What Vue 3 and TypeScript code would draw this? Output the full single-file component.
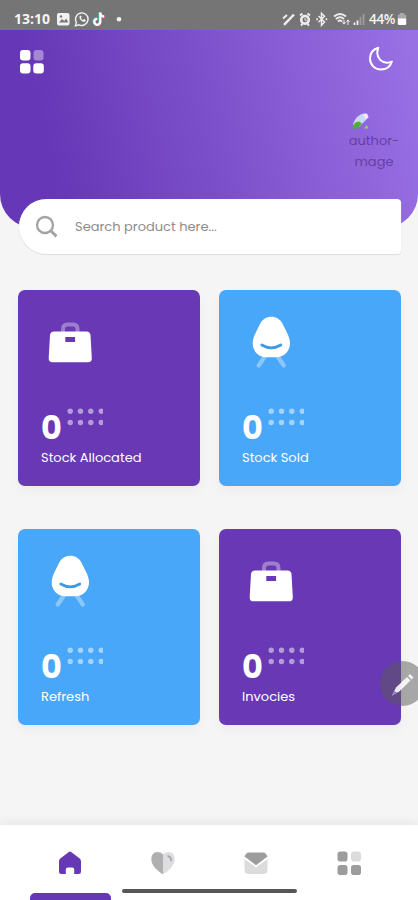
<script setup lang="ts">
interface StockCard {
  label: string
  value: number
  tone: 'purple' | 'blue'
  icon: 'bag' | 'chair'
  name: string
}

const cards: StockCard[] = [
  { label: 'Stock Allocated', value: 0, tone: 'purple', icon: 'bag', name: 'allocated' },
  { label: 'Stock Sold', value: 0, tone: 'blue', icon: 'chair', name: 'sold' },
  { label: 'Refresh', value: 0, tone: 'blue', icon: 'chair', name: 'refresh' },
  { label: 'Invocies', value: 0, tone: 'purple', icon: 'bag', name: 'invoices' },
]

const dotColumns = [3.2, 13.5, 23.8, 34.3]
const dotRows = [3.2, 14.5]
</script>

<template>
  <div class="screen">
    <div class="status">
      <span class="clock">13:10</span>
      <svg class="status-left" width="68" height="18" viewBox="0 0 68 18">
        <rect x="1" y="3" width="12.5" height="12.5" rx="2" fill="#f2f2f2" />
        <path d="M3 12.5l3-3.5 2.2 2 2-2.4 2 3.9z" fill="#757575" />
        <circle cx="5" cy="6.5" r="1.2" fill="#757575" />
        <path d="M19.4 15.8l1-3.4a6.3 6.3 0 1 1 2.6 2.4z" fill="none" stroke="#f2f2f2" stroke-width="1.4" />
        <path d="M23.5 6.2c-.5 3 2.5 6 5.6 5.5l.7-1.7-1.9-.9-1 1c-1-.5-1.7-1.3-2-2.1l.8-.9-.8-1.7z" fill="#f2f2f2" />
        <path d="M44.3 2.5v9.3a3 3 0 1 1-3-3M44.3 3.5c.5 2 2 3 4 3.2" fill="none" stroke="#38cfc8" stroke-width="2.3" transform="translate(-.7 -.4)" />
        <path d="M44.3 2.5v9.3a3 3 0 1 1-3-3M44.3 3.5c.5 2 2 3 4 3.2" fill="none" stroke="#e5486c" stroke-width="2.3" transform="translate(.7 .6)" />
        <path d="M44.3 2.5v9.3a3 3 0 1 1-3-3M44.3 3.5c.5 2 2 3 4 3.2" fill="none" stroke="#fff" stroke-width="2.3" />
        <circle cx="63" cy="9.3" r="2.3" fill="#f2f2f2" />
      </svg>
      <svg class="status-right" width="84" height="18" viewBox="0 0 84 18">
        <g fill="none" stroke="#ededed" stroke-width="1.5">
          <path d="M3 14.800L13 4.500" stroke-width="2.500" />
          <path d="M2 8.500l4-3.500" stroke-width="2" />
          <circle cx="24" cy="9.800" r="3.800" stroke-width="2.600" />
          <path d="M24 8v2.200h1.800" stroke-width="1" />
          <path d="M19 5.500l2.500-2M29 5.500l-2.500-2M20 15.500l1.500-1.500M28 15.500L26.500 14" stroke-width="2" />
          <path d="M37.500 6l6 6-3 3.300V3.200l3 3-6 6" />
          <path d="M35.300 9.300h1.600M44.600 9.300h1.600" stroke-width="2" />
          <path d="M53 6.500q6-5 12 0M55 9q4-3.500 8 0M57 11.500q2-2 4 0" stroke-width="2" />
          <path d="M63 14v-4M67 10v5M61.500 12l1.500 2.200 1.500-2.200M65.500 12l1.500-2.200 1.500 2.200" stroke-width="1" />
          <path d="M73.500 15v-2.500M76.500 15v-4.500" stroke-width="1.800" />
          <path d="M79.500 15V7M82.500 15V4" stroke="#9d9d9d" stroke-width="1.800" />
        </g>
      </svg>
      <span class="battery-text">44%</span>
      <svg width="10" height="14" viewBox="0 0 10 14">
        <path d="M3 1h4v1.500h1q1.200 0 1.200 1.200V7H.8V3.700Q.8 2.500 2 2.500h1z" fill="#a9a9a9" />
        <path d="M.8 6.500h8.400v5.300q0 1.200-1.200 1.200H2Q.8 13 .8 11.800z" fill="#fff" />
      </svg>
    </div>

    <header class="hero">
      <div class="hero-top">
        <svg width="26" height="26" viewBox="0 0 26 26" fill="#fff">
          <rect x="1" y="1" width="10.500" height="10.500" rx="3" />
          <rect x="14.500" y="1" width="10" height="10.500" rx="3" opacity=".4" />
          <rect x="1" y="14.300" width="10.500" height="10.200" rx="3" />
          <rect x="14.300" y="14.300" width="10.500" height="10.200" rx="3" />
        </svg>
        <svg width="26" height="26" viewBox="0 0 26 26">
          <path d="M10.300 1.800C5.300 3.300 2 7.300 2 12.500 2 18.800 6.800 23.500 13 23.500c5.200 0 9.400-3.200 10.900-8-1.600.9-3.300 1.300-5 1.200C13.500 16.500 9.500 12.500 9.300 7.300c0-2 .2-3.800 1-5.500z" fill="none" stroke="#fff" stroke-width="2" stroke-linejoin="round" />
        </svg>
      </div>
      <div class="author">
        <svg width="18" height="17" viewBox="0 0 18 17">
          <path d="M1 12C2.500 6 6 2 11 .8h4l1.500 3.500L7 14z" fill="#c9d9f5" />
          <path d="M11 .8h4l1.500 3.700L13 6z" fill="#f3e6f7" />
          <path d="M.5 15.500Q1.500 8.500 7 8.500l3 2-4.500 5z" fill="#4eae35" />
          <path d="M12 15.500l2.500-3.500 1.500 2v1.500z" fill="#91cc7f" />
        </svg>
        <span class="alt-first">author-</span>
        <span class="alt-second">mage</span>
      </div>
    </header>

    <div class="search">
      <svg width="24" height="24" viewBox="0 0 24 24" fill="none" stroke="#a3a3a3">
        <circle cx="10" cy="10" r="8" stroke-width="2.300" />
        <path d="M16 16l5.500 5.300" stroke-width="3" />
      </svg>
      <span>Search product here...</span>
    </div>

    <main class="cards">
      <article v-for="card in cards" :key="card.name" class="card" :class="card.tone">
        <svg v-if="card.icon === 'bag'" class="card-icon" width="50" height="56" viewBox="0 0 50 56">
          <path d="M17 18v-3q0-4.500 4.500-4.500h5.500q4.500 0 4.500 4.500v3" fill="none" stroke="#fff" stroke-opacity=".36" stroke-width="4" />
          <path fill-rule="evenodd" d="M8 17.500h32.500q3.500 0 4 3.500l1.300 23q.2 4.300-4 4.300H6.700q-4.200 0-4-4.300L4 21q.5-3.500 4-3.500zM19.300 23v5h9.800v-5z" fill="#fff" />
        </svg>
        <svg v-else class="card-icon" width="50" height="56" viewBox="0 0 50 56">
          <path d="M17.500 43l-5.800 8.500M31 43l5.800 8.500" stroke="#fff" stroke-opacity=".36" stroke-width="4.300" stroke-linecap="round" />
          <path d="M24.300 2.700c5 0 8.700 2.500 11 6.500l4 8c2 4 3.700 8 3.700 12 0 8-6 14-14 14h-9.500c-8 0-13.800-6-13.800-14 0-4 1.700-8 3.700-12l4-8c2.300-4 6-6.500 10.900-6.500z" fill="#fff" />
          <path d="M14.800 31q9.500 5.600 19 0" fill="none" stroke="#3d9ae6" stroke-width="2.800" stroke-linecap="round" />
        </svg>
        <div class="figures">
          <span class="value">{{ card.value }}</span>
          <svg width="36" height="18" viewBox="0 0 36 18" fill="#fff" fill-opacity=".5">
            <template v-for="y in dotRows" :key="y">
              <circle v-for="x in dotColumns" :key="x" :cx="x" :cy="y" r="2.700" />
            </template>
          </svg>
        </div>
        <div class="label">{{ card.label }}</div>
      </article>
    </main>

    <nav class="tabs">
      <div class="tab">
        <svg width="28" height="28" viewBox="0 0 28 28">
          <path d="M12.500 3.200Q14 2 15.500 3.200l8.200 6.300q1.300 1 1.300 2.700v10.500q0 2.300-2.300 2.300h-4.500v-4.500q0-2-2-2h-4.400q-2 0-2 2V25H5.300Q3 25 3 22.700V12.200q0-1.700 1.300-2.700z" fill="#6638b6" />
        </svg>
        <span class="indicator"></span>
      </div>
      <div class="tab">
        <svg width="28" height="28" viewBox="0 0 28 28">
          <path d="M14 5.200Q11.500 3 8.300 3C4.700 3 2.300 6 2.300 10c0 5.500 4 10 10.200 14.500q.8.500 1.500.5z" fill="#b0b0b2" />
          <path d="M14 5.200Q16.500 3 19.700 3c3.600 0 6 3 6 7 0 5.500-4 10-10.200 14.500q-.8.500-1.500.5z" fill="#dedee0" />
          <path d="M18.500 7q4 .7 3.700 5.200" fill="none" stroke="#aaa" stroke-width="1.800" />
        </svg>
      </div>
      <div class="tab">
        <svg width="28" height="28" viewBox="0 0 28 28">
          <path d="M2.500 10l11.500 8.500L25.500 10v10.500q0 4.500-4.500 4.500H7q-4.500 0-4.500-4.500z" fill="#dcdcdc" />
          <path d="M7 3.500h14q2.800 0 4.500 4L14 16.200 2.500 7.500q1.700-4 4.500-4z" fill="#9c9c9e" />
        </svg>
      </div>
      <div class="tab">
        <svg width="28" height="28" viewBox="0 0 28 28" fill="#9c9c9e">
          <rect x="2.500" y="2.500" width="10" height="10" rx="2.800" />
          <rect x="16" y="2.500" width="10" height="10" rx="2.800" fill="#dcdcdc" />
          <rect x="2.500" y="16" width="10" height="10" rx="2.800" />
          <rect x="16" y="16" width="10" height="10" rx="2.800" />
        </svg>
      </div>
    </nav>

    <div class="pen">
      <svg width="24" height="26" viewBox="0 0 24 26">
        <path d="M1 24.500L5 16.500 16 6l3.500 3.500-11 10.700z" fill="#fff" fill-opacity=".88" />
        <path d="M17 5l2-2 3.500 3.500-2 2z" fill="#fff" fill-opacity=".85" />
        <path d="M1 24.500l2.200-4.400 3 1.700z" fill="#9a79cc" />
      </svg>
    </div>
    <div class="gesture"></div>
  </div>
</template>

<style>
body {
  margin: 0;
}
</style>

<style scoped>
.screen {
  position: relative;
  display: flex;
  flex-direction: column;
  box-sizing: border-box;
  width: 418px;
  height: 900px;
  overflow: hidden;
  background: #f5f5f5;
  font-family: Poppins, Lato, sans-serif;
}
svg {
  display: block;
  flex: none;
}
.status {
  display: flex;
  align-items: center;
  box-sizing: border-box;
  height: 30px;
  flex: none;
  padding: 7px 11px 0 14px;
  background: #757575;
  color: #f4f4f4;
}
.clock {
  width: 42px;
  font: 700 14px/18px "Open Sans", sans-serif;
  white-space: nowrap;
}
.status-right {
  margin-left: auto;
}
.battery-text {
  width: 28px;
  margin-left: 4px;
  font: 600 13.5px/18px "Open Sans", sans-serif;
  letter-spacing: -0.3px;
}
.hero {
  flex: none;
  height: 198px;
  background: linear-gradient(77deg, #6637b6 14%, #9a70e5 98%);
  border-radius: 0 0 34px 34px;
}
.hero-top {
  display: flex;
  justify-content: space-between;
  padding: 19px 24px 0 19px;
}
.hero-top svg:last-child {
  margin-top: -3px;
}
.author {
  display: flex;
  flex-direction: column;
  align-items: center;
  width: 52px;
  margin: 38px 18px 0 auto;
  color: #66409f;
  font-size: 13px;
  line-height: 21px;
}
.author svg {
  margin-right: 27px;
}
.search {
  position: relative;
  display: flex;
  align-items: center;
  gap: 15px;
  box-sizing: border-box;
  flex: none;
  height: 55px;
  margin: -29px 17px 0 19px;
  padding-left: 17px;
  background: #fff;
  border-radius: 28px 4px 4px 28px;
  box-shadow: 0 1px 1px #ddd;
  color: #8c8c8c;
  font-size: 13px;
}
.search svg {
  margin-left: -1px;
  margin-right: 1px;
}
.cards {
  display: grid;
  grid-template-columns: 182px 182px;
  gap: 43px 19px;
  padding: 36px 0 0 18px;
}
.card {
  box-sizing: border-box;
  height: 196px;
  padding: 24px 23px 0;
  border-radius: 7px;
  color: #fff;
  box-shadow: 0 5px 12px rgba(0, 0, 0, 0.04);
}
.purple {
  background: #6838b5;
}
.blue {
  background: #48a7f8;
}
.card-icon {
  margin-left: 5px;
}
.figures {
  display: flex;
  gap: 6px;
  height: 40px;
  margin-top: 38px;
}
.value {
  width: 20px;
  font: 700 32px/39px Poppins, "Open Sans", sans-serif;
}
.label {
  font-size: 13px;
  line-height: 19px;
  white-space: nowrap;
}
.tabs {
  position: relative;
  display: grid;
  grid-template-columns: repeat(4, 93px);
  flex: none;
  height: 75px;
  margin-top: auto;
  padding-left: 23px;
  background: #fff;
  box-shadow: 0 -3px 10px rgba(0, 0, 0, 0.06);
}
.tab {
  display: flex;
  flex-direction: column;
  align-items: center;
  padding-top: 24px;
}
.indicator {
  width: 81px;
  height: 7px;
  margin: 16px -1px 0 0;
  border-radius: 5px 5px 0 0;
  background: #6638b6;
}
.pen {
  position: absolute;
  left: 380px;
  top: 661px;
  display: flex;
  align-items: center;
  box-sizing: border-box;
  width: 45px;
  height: 45px;
  padding-left: 11px;
  border-radius: 50%;
  background: rgba(90, 90, 90, 0.5);
}
.gesture {
  position: absolute;
  left: 122px;
  top: 889px;
  width: 175px;
  height: 4px;
  border-radius: 2px;
  background: #565656;
}
</style>
